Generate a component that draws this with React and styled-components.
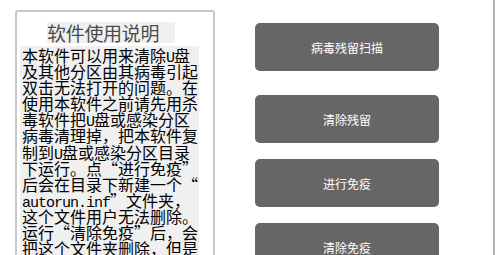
import React from "react";
import styled, { createGlobalStyle } from "styled-components";

const GlobalStyle = createGlobalStyle`
  html, body {
    margin: 0;
    padding: 0;
    background: #fff;
  }
  body {
    font-family: "Noto Sans CJK SC", sans-serif;
  }
`;

const Page = styled.div`
  width: 495px;
  height: 255px;
  box-sizing: border-box;
  display: flex;
  align-items: flex-start;
  border-right: 2px solid #b4b4b4;
  overflow: hidden;
`;

const Panel = styled.div`
  width: 200px;
  height: 260px;
  margin: 10px 0 0 15px;
  box-sizing: border-box;
  border: 2px solid #c8c8c8;
  border-radius: 3px;
  background: #fff;
  padding: 10px 14px 0 3px;
  display: flex;
  flex-direction: column;
  align-items: flex-start;
`;

const Title = styled.div`
  margin-left: 27px;
  width: 128px;
  height: 21px;
  background: #f0f0f0;
  color: #4a4a4a;
  font-family: "Noto Sans CJK SC", serif;
  font-size: 19px;
  line-height: 21px;
  letter-spacing: -0.3px;
  white-space: nowrap;
`;

const Body = styled.div`
  margin-top: 3px;
  width: 179px;
  box-sizing: border-box;
  padding: 1px 0 0 2px;
  background: #f0f0f0;
  color: #000;
  font-family: "Noto Sans CJK SC", sans-serif;
  font-size: 16px;
  line-height: 16px;
`;

const Line = styled.div`
  white-space: nowrap;
  height: 16px;
  margin-bottom: 0.1px;
  overflow: visible;
`;

const Mono = styled.span`
  font-family: "Liberation Mono", monospace;
  font-size: 15px;
  letter-spacing: -1px;
`;

const Actions = styled.div`
  margin: 23px 0 0 40px;
  display: flex;
  flex-direction: column;
  gap: 16px;
`;

const ActionButton = styled.button`
  width: 184px;
  height: 48px;
  margin-bottom: ${(p) => (p.$extra ? "8px" : "0")};
  border: none;
  border-radius: 5px;
  background: #666666;
  color: #fff;
  font-family: "Noto Sans CJK SC", sans-serif;
  font-size: 12px;
  padding: 0;
  cursor: pointer;
`;

const lines = [
  "本软件可以用来清除[U]盘",
  "及其他分区由其病毒引起",
  "双击无法打开的问题。在",
  "使用本软件之前请先用杀",
  "毒软件把[U]盘或感染分区",
  "病毒清理掉，把本软件复",
  "制到[U]盘或感染分区目录",
  "下运行。点“进行免疫”",
  "后会在目录下新建一个“",
  "[autorun.inf]”文件夹，",
  "这个文件用户无法删除。",
  "运行“清除免疫”后，会",
  "把这个文件夹删除，但是",
];

function renderLine(text) {
  return text.split(/(\[[^\]]+\])/).map((part, i) =>
    part.startsWith("[") ? <Mono key={i}>{part.slice(1, -1)}</Mono> : part
  );
}

const buttons = ["病毒残留扫描", "清除残留", "进行免疫", "清除免疫"];

export default function App() {
  return (
    <>
      <GlobalStyle />
      <Page>
        <Panel>
          <Title>软件使用说明</Title>
          <Body>
            {lines.map((l, i) => (
              <Line key={i}>{renderLine(l)}</Line>
            ))}
          </Body>
        </Panel>
        <Actions>
          {buttons.map((b, i) => (
            <ActionButton key={b} $extra={i === 0}>
              {b}
            </ActionButton>
          ))}
        </Actions>
      </Page>
    </>
  );
}
